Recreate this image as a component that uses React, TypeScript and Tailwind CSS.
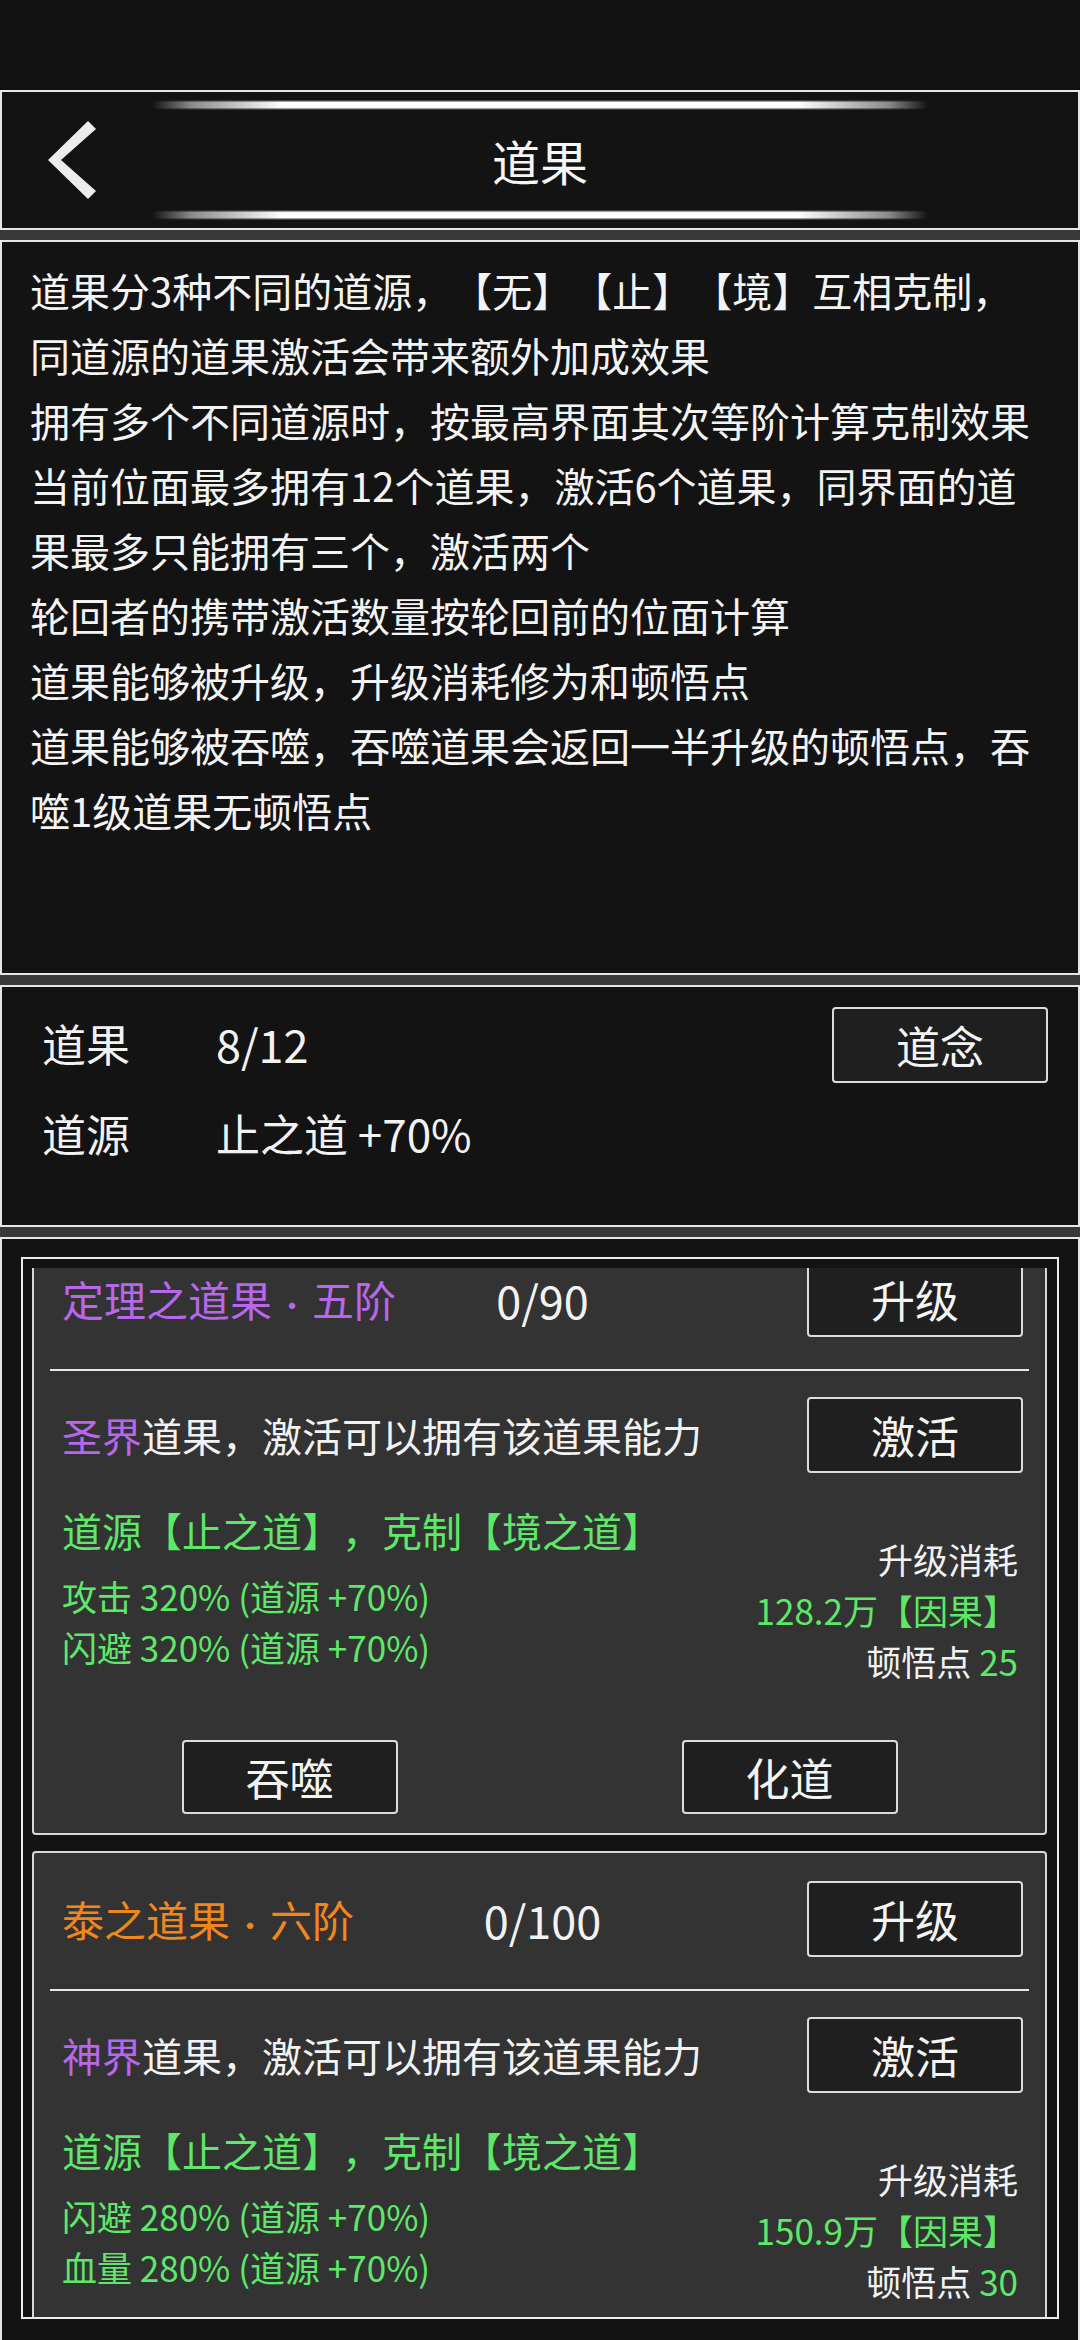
import React from "react";

const intro = [
  "道果分3种不同的道源，【无】【止】【境】互相克制，",
  "同道源的道果激活会带来额外加成效果",
  "拥有多个不同道源时，按最高界面其次等阶计算克制效果",
  "当前位面最多拥有12个道果，激活6个道果，同界面的道",
  "果最多只能拥有三个，激活两个",
  "轮回者的携带激活数量按轮回前的位面计算",
  "道果能够被升级，升级消耗修为和顿悟点",
  "道果能够被吞噬，吞噬道果会返回一半升级的顿悟点，吞",
  "噬1级道果无顿悟点",
];

interface Fruit {
  id: string;
  name: string;
  tier: string;
  nameColor: string;
  count: string;
  realm: string;
  stats: string[];
  cost: string;
  points: number;
  actions: boolean;
}

const fruits: Fruit[] = [
  {
    id: "dingli",
    name: "定理之道果",
    tier: "五阶",
    nameColor: "text-[#b866ea]",
    count: "0/90",
    realm: "圣界",
    stats: ["攻击 320% (道源 +70%)", "闪避 320% (道源 +70%)"],
    cost: "128.2万",
    points: 25,
    actions: true,
  },
  {
    id: "tai",
    name: "泰之道果",
    tier: "六阶",
    nameColor: "text-[#f0861c]",
    count: "0/100",
    realm: "神界",
    stats: ["闪避 280% (道源 +70%)", "血量 280% (道源 +70%)"],
    cost: "150.9万",
    points: 30,
    actions: true,
  },
];

function Btn({ label, tall = true }: { label: string; tall?: boolean }) {
  return (
    <div
      className={`w-[216px] ${tall ? "h-[76px]" : "h-[74px]"} flex items-center justify-center rounded-[4px] border-2 border-[#dcdcdc] bg-[#1f1f1f] text-[44px] leading-none text-[#f4f4f4]`}
    >
      {label}
    </div>
  );
}

function Gap() {
  return <div className="h-[10px] bg-[#393939]" />;
}

function FruitCard({ fruit, first }: { fruit: Fruit; first?: boolean }) {
  return (
    <div
      className={`${first ? "-mt-[37px]" : "mt-[16px]"} rounded-[4px] border-2 border-[#d6d6d6] bg-[#333333] pt-[28px] pb-[19px]`}
    >
      <div className="grid grid-cols-[1fr_auto_1fr] items-center h-[76px] pl-[28px] pr-[22px]">
        <div className={`text-[42px] leading-none whitespace-nowrap ${fruit.nameColor}`}>
          {fruit.name}
          <span className="inline-block w-[40px] text-center text-[30px]">·</span>
          {fruit.tier}
        </div>
        <div className="text-[45px] leading-none text-[#f2f2f2]">{fruit.count}</div>
        <div className="justify-self-end">
          <Btn label="升级" />
        </div>
      </div>

      <div className="mt-[32px] mx-[16px] h-[2px] bg-[#e8e8e8]" />

      <div className="mt-[26px] flex items-center justify-between h-[76px] pl-[28px] pr-[22px]">
        <div className="text-[40px] leading-none text-[#f2f2f2] whitespace-nowrap">
          <span className="text-[#b866ea]">{fruit.realm}</span>道果，激活可以拥有该道果能力
        </div>
        <Btn label="激活" />
      </div>

      <div className="mt-[32px] flex justify-between pl-[28px] pr-[27px]">
        <div className="flex flex-col">
          <div className="h-[50px] flex items-center text-[40px] text-[#5ee86a] whitespace-nowrap">
            道源【止之道】，克制【境之道】
          </div>
          <div className="mt-[15px] flex flex-col">
            {fruit.stats.map((s) => (
              <div key={s} className="text-[35px] leading-[51px] text-[#5ee86a] whitespace-nowrap">
                {s}
              </div>
            ))}
          </div>
        </div>
        <div className="mt-[28px] flex flex-col items-end text-[35px] leading-[51px] whitespace-nowrap">
          <div className="text-[#f2f2f2]">升级消耗</div>
          <div className="text-[#5ee86a]">{fruit.cost}【因果】</div>
          <div className="text-[#f2f2f2]">
            顿悟点 <span className="text-[#5ee86a]">{fruit.points}</span>
          </div>
        </div>
      </div>

      {fruit.actions && (
        <div className="mt-[54px] flex justify-center gap-[284px]">
          <Btn label="吞噬" tall={false} />
          <Btn label="化道" tall={false} />
        </div>
      )}
    </div>
  );
}

export default function App() {
  return (
    <div className="w-[1080px] h-[2340px] overflow-hidden bg-[#121212] font-['Noto_Sans_CJK_SC','Noto_Sans',sans-serif] text-[#f2f2f2] [text-spacing-trim:space-all]">
      {/* status bar */}
      <div className="h-[90px] bg-[#121212]" />

      {/* header */}
      <div className="relative h-[140px] border-2 border-[#e6e6e6] bg-[#131313] flex items-center">
        <div className="absolute left-[150px] top-[8px] w-[776px] h-[10px] bg-[linear-gradient(90deg,transparent,#8a8a8a_5%,#ffffff_17%,#ffffff_83%,#8a8a8a_95%,transparent)] [mask-image:linear-gradient(180deg,transparent,#000_25%,#000_75%,transparent)]" />
        <div className="absolute left-[150px] bottom-[8px] w-[776px] h-[10px] bg-[linear-gradient(90deg,transparent,#8a8a8a_5%,#ffffff_17%,#ffffff_83%,#8a8a8a_95%,transparent)] [mask-image:linear-gradient(180deg,transparent,#000_25%,#000_75%,transparent)]" />
        <div className="grid grid-cols-[1fr_auto_1fr] items-center w-full">
          <div className="pl-[44px]">
            <svg width="50" height="78" viewBox="0 0 50 78">
              <polygon points="42,0 50,8 15,39 50,70 42,78 2,39" fill="#ececec" />
            </svg>
          </div>
          <div className="text-[48px] leading-none text-[#f6f6f6]">道果</div>
          <div />
        </div>
      </div>

      <Gap />

      {/* rules */}
      <div className="h-[735px] border-2 border-[#e6e6e6] bg-[#131313] pt-[16px] pl-[28px]">
        {intro.map((line) => (
          <div key={line} className="text-[40px] leading-[65px] whitespace-nowrap text-[#f4f4f4]">
            {line}
          </div>
        ))}
      </div>

      <Gap />

      {/* summary */}
      <div className="h-[242px] border-2 border-[#e6e6e6] bg-[#131313] pt-[20px] pl-[40px] pr-[30px]">
        <div className="flex items-center h-[76px]">
          <div className="w-[174px] text-[44px] leading-none -mt-[4px]">道果</div>
          <div className="flex-1 text-[45px] leading-none -mt-[4px]">8/12</div>
          <Btn label="道念" />
        </div>
        <div className="mt-[20px] flex items-center h-[60px]">
          <div className="w-[174px] text-[44px] leading-none">道源</div>
          <div className="text-[44px] leading-none">止之道 +70%</div>
        </div>
      </div>

      <Gap />

      {/* fruit list */}
      <div className="h-[1110px] border-2 border-[#e6e6e6] bg-[#131313] pt-[18px] px-[19px]">
        <div className="h-[1062px] border-2 border-[#ececec] pt-[9px] pl-[9px] pr-[10px] flex flex-col">
          <div className="flex-1 overflow-hidden">
            {fruits.map((f, i) => (
              <FruitCard key={f.id} fruit={f} first={i === 0} />
            ))}
          </div>
        </div>
      </div>
    </div>
  );
}
